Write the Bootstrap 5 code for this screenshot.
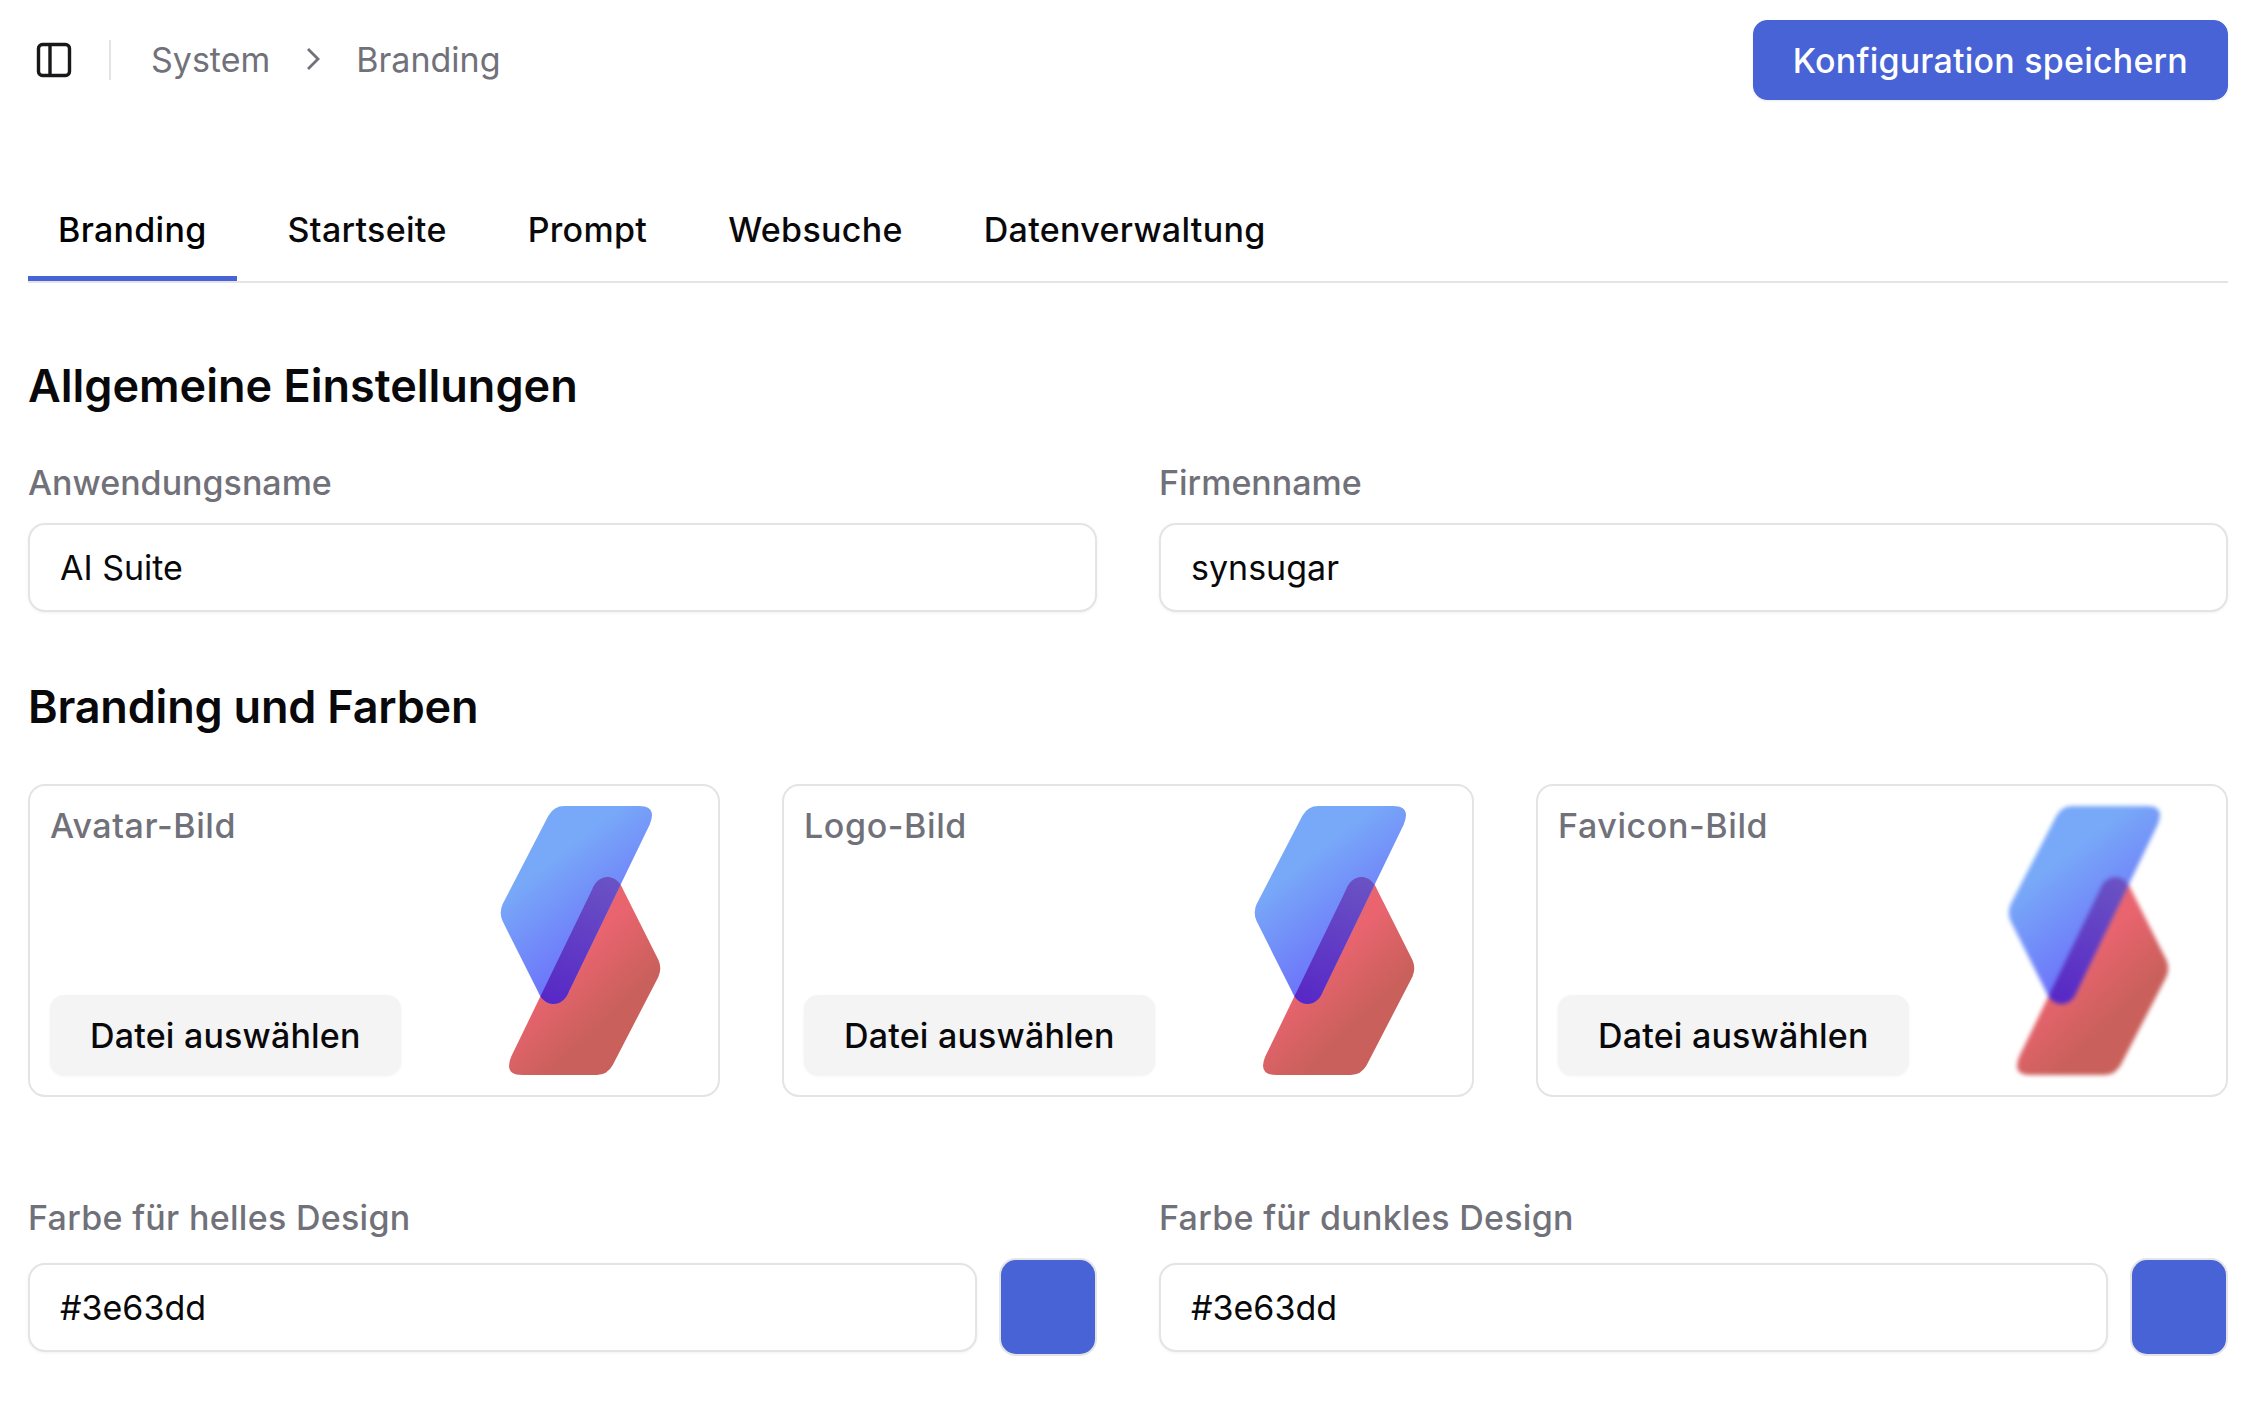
<!DOCTYPE html>
<html lang="de">
<head>
    <meta charset="UTF-8">
    <meta name="viewport" content="width=device-width, initial-scale=1.0">
    <title>Branding</title>
    <link href="https://cdn.jsdelivr.net/npm/bootstrap@5.3.3/dist/css/bootstrap.min.css" rel="stylesheet">
    <style>
        body {
            font-family: Inter, "Liberation Sans", sans-serif;
            font-size: 34px;
            color: #09090b;
            background-color: #fff;
        }
        .page-wrap {
            padding: 20px 30px 0 28px;
        }
        .top-bar {
            height: 80px;
        }
        .panel-icon {
            width: 38px;
            height: 40px;
            margin-left: 8px;
        }
        .top-divider {
            width: 2px;
            height: 40px;
            background-color: #e4e4e7;
            margin: 0 40px 0 35px;
        }
        .crumbs {
            --bs-breadcrumb-margin-bottom: 0;
            color: #71717a;
            gap: 32px;
            align-items: center;
            padding-bottom: 2px;
        }
        .crumbs .breadcrumb-item {
            padding: 0;
            color: #71717a;
        }
        .crumbs .breadcrumb-item::before {
            display: none;
        }
        .crumb-chevron {
            width: 22px;
            height: 26px;
            display: block;
        }
        .btn-save {
            --bs-btn-bg: #4763d6;
            --bs-btn-border-color: #4763d6;
            --bs-btn-color: #fff;
            --bs-btn-font-size: 34px;
            --bs-btn-font-weight: 500;
            --bs-btn-padding-x: 39px;
            --bs-btn-padding-y: 0;
            --bs-btn-border-radius: 14px;
            letter-spacing: .2px;
            height: 80px;
            box-shadow: 0 1px 3px rgba(0, 0, 0, .08);
        }
        .page-tabs {
            --bs-nav-tabs-border-width: 0;
            --bs-nav-link-padding-x: 30px;
            --bs-nav-link-padding-y: 0;
            --bs-nav-link-color: #09090b;
            --bs-nav-link-font-weight: 500;
            margin-top: 87px;
            gap: 21px;
            letter-spacing: .3px;
            border-bottom: 2px solid #e4e4e7;
        }
        .page-tabs .nav-link {
            height: 94px;
            line-height: 86px;
            border: 0;
            border-bottom: 5px solid transparent;
            margin: 0;
            background: none;
            color: #09090b;
        }
        .page-tabs .nav-link.active {
            border-bottom-color: #4763d6;
        }
        .section-title {
            font-size: 45px;
            font-weight: 600;
            line-height: 54px;
            margin: 0;
        }
        .first-title {
            margin-top: 76px;
        }
        .second-title {
            margin-top: 68px;
            letter-spacing: -.2px;
        }
        .field-label {
            color: #71717a;
            font-weight: 500;
            line-height: 42px;
            margin: 0 0 19px;
        }
        .form-row {
            --bs-gutter-x: 62px;
            --bs-gutter-y: 0;
        }
        .name-row {
            margin-top: 49px;
        }
        .field-input {
            height: 89px;
            font-size: 34px;
            padding: 0 30px;
            color: #09090b;
            border: 2px solid #e4e4e7;
            border-radius: 17px;
            box-shadow: 0 1px 3px rgba(0, 0, 0, .06);
        }
        .image-row {
            margin-top: 50px;
        }
        .image-card {
            height: 313px;
            border: 2px solid #e4e4e7;
            border-radius: 17px;
            padding: 20px;
            flex-direction: row;
            justify-content: space-between;
        }
        .card-label {
            color: #71717a;
            font-weight: 500;
            letter-spacing: .6px;
            line-height: 40px;
        }
        .btn-file {
            --bs-btn-bg: #f4f4f5;
            --bs-btn-border-color: #f4f4f5;
            --bs-btn-color: #09090b;
            --bs-btn-font-size: 34px;
            --bs-btn-font-weight: 500;
            --bs-btn-padding-x: 39px;
            --bs-btn-padding-y: 0;
            --bs-btn-border-radius: 14px;
            letter-spacing: .2px;
            height: 80px;
            box-shadow: 0 1px 3px rgba(0, 0, 0, .06);
        }
        .logo-pic {
            width: 165px;
            height: 269px;
            margin-right: 35px;
            flex: none;
        }
        .logo-blur {
            filter: blur(2px);
        }
        .color-row {
            margin-top: 100px;
        }
        .color-row .field-label {
            letter-spacing: .3px;
        }
        .color-field {
            gap: 22px;
        }
        .swatch {
            width: 98px;
            height: 98px;
            flex: none;
            background-color: #4763d6;
            border: 2px solid #e4e4e7;
            border-radius: 17px;
        }
    </style>
</head>
<body>

    <svg width="0" height="0" class="position-absolute">
        <defs>
            <linearGradient id="blueFill" gradientUnits="userSpaceOnUse" x1="300" y1="250" x2="480" y2="480">
                <stop offset="0" stop-color="#78a8f8"/>
                <stop offset="1" stop-color="#6d76fa"/>
            </linearGradient>
            <linearGradient id="redFill" gradientUnits="userSpaceOnUse" x1="300" y1="600" x2="440" y2="745">
                <stop offset="0" stop-color="#e9646f"/>
                <stop offset="1" stop-color="#c9605b"/>
            </linearGradient>
            <linearGradient id="midFill" gradientUnits="userSpaceOnUse" x1="440" y1="320" x2="280" y2="690">
                <stop offset="0" stop-color="#6a52c4"/>
                <stop offset="1" stop-color="#5828c6"/>
            </linearGradient>
            <clipPath id="redClip">
                <path d="M155,854 L396,356 C415,304 470,304 490,356 L595,565 Q606,590 595,615 L458,880 Q442,909 410,909 L188,909 Q132,909 155,854 Z"/>
            </clipPath>
            <symbol id="logoMark" viewBox="116 105 492 804">
                <path fill="url(#redFill)" d="M155,854 L396,356 C415,304 470,304 490,356 L595,565 Q606,590 595,615 L458,880 Q442,909 410,909 L188,909 Q132,909 155,854 Z"/>
                <path fill="url(#blueFill)" d="M569,160 L328,658 C309,710 254,710 234,658 L129,449 Q118,424 129,399 L266,134 Q282,105 314,105 L536,105 Q592,105 569,160 Z"/>
                <path fill="url(#midFill)" clip-path="url(#redClip)" d="M569,160 L328,658 C309,710 254,710 234,658 L129,449 Q118,424 129,399 L266,134 Q282,105 314,105 L536,105 Q592,105 569,160 Z"/>
            </symbol>
        </defs>
    </svg>

    <div class="page-wrap">

        <div class="top-bar d-flex align-items-center">
            <svg class="panel-icon" viewBox="0 0 38 40" fill="none" stroke="#18181b" stroke-width="3.4">
                <rect x="2.5" y="4.5" width="31" height="31" rx="4"/>
                <line x1="14" y1="4.5" x2="14" y2="35.5"/>
            </svg>
            <div class="top-divider"></div>
            <ol class="breadcrumb crumbs">
                <li class="breadcrumb-item">System</li>
                <li class="breadcrumb-item">
                    <svg class="crumb-chevron" viewBox="0 0 22 26" fill="none" stroke="#71717a" stroke-width="2.8">
                        <path d="M6,3 L16,13 L6,23"/>
                    </svg>
                </li>
                <li class="breadcrumb-item">Branding</li>
            </ol>
            <button type="button" class="btn btn-save ms-auto">Konfiguration speichern</button>
        </div>

        <ul class="nav nav-tabs page-tabs">
            <li class="nav-item"><a class="nav-link active" href="#">Branding</a></li>
            <li class="nav-item"><a class="nav-link" href="#">Startseite</a></li>
            <li class="nav-item"><a class="nav-link" href="#">Prompt</a></li>
            <li class="nav-item"><a class="nav-link" href="#">Websuche</a></li>
            <li class="nav-item"><a class="nav-link" href="#">Datenverwaltung</a></li>
        </ul>

        <h2 class="section-title first-title">Allgemeine Einstellungen</h2>

        <div class="row form-row name-row">
            <div class="col-6">
                <label class="field-label d-block">Anwendungsname</label>
                <input type="text" class="form-control field-input" value="AI Suite">
            </div>
            <div class="col-6">
                <label class="field-label d-block">Firmenname</label>
                <input type="text" class="form-control field-input" value="synsugar">
            </div>
        </div>

        <h2 class="section-title second-title">Branding und Farben</h2>

        <div class="row form-row image-row">
            <div class="col-4">
                <div class="card image-card">
                    <div class="d-flex flex-column justify-content-between align-items-start">
                        <span class="card-label">Avatar-Bild</span>
                        <button type="button" class="btn btn-file">Datei auswählen</button>
                    </div>
                    <svg class="logo-pic"><use href="#logoMark"/></svg>
                </div>
            </div>
            <div class="col-4">
                <div class="card image-card">
                    <div class="d-flex flex-column justify-content-between align-items-start">
                        <span class="card-label">Logo-Bild</span>
                        <button type="button" class="btn btn-file">Datei auswählen</button>
                    </div>
                    <svg class="logo-pic"><use href="#logoMark"/></svg>
                </div>
            </div>
            <div class="col-4">
                <div class="card image-card">
                    <div class="d-flex flex-column justify-content-between align-items-start">
                        <span class="card-label">Favicon-Bild</span>
                        <button type="button" class="btn btn-file">Datei auswählen</button>
                    </div>
                    <svg class="logo-pic logo-blur"><use href="#logoMark"/></svg>
                </div>
            </div>
        </div>

        <div class="row form-row color-row">
            <div class="col-6">
                <label class="field-label d-block">Farbe für helles Design</label>
                <div class="d-flex align-items-center color-field">
                    <input type="text" class="form-control field-input" value="#3e63dd">
                    <div class="swatch"></div>
                </div>
            </div>
            <div class="col-6">
                <label class="field-label d-block">Farbe für dunkles Design</label>
                <div class="d-flex align-items-center color-field">
                    <input type="text" class="form-control field-input" value="#3e63dd">
                    <div class="swatch"></div>
                </div>
            </div>
        </div>

    </div>

    <script src="https://cdn.jsdelivr.net/npm/bootstrap@5.3.3/dist/js/bootstrap.bundle.min.js"></script>
</body>
</html>
